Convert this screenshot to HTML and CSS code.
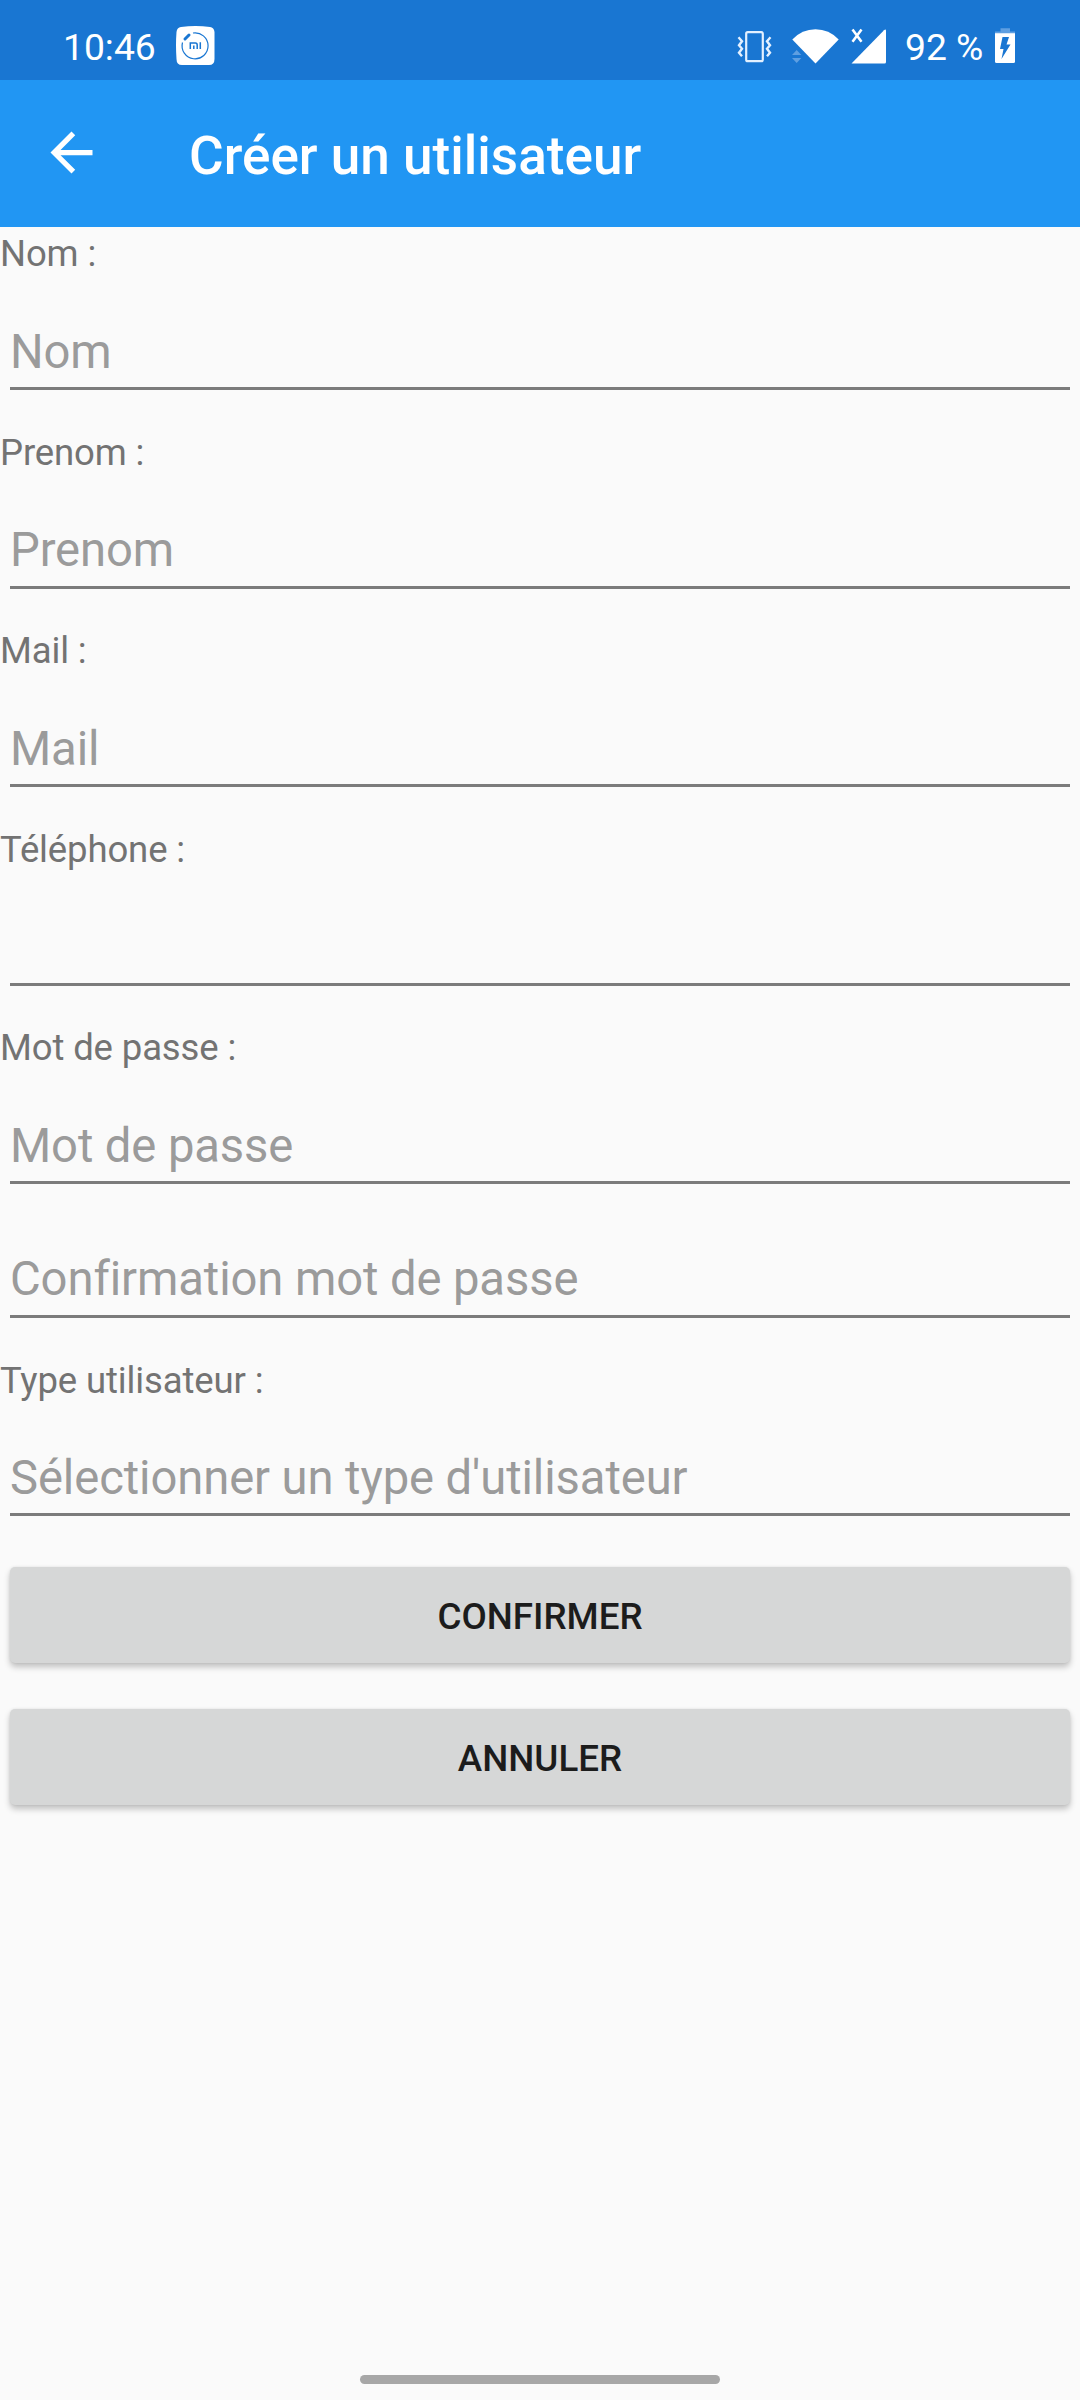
FILE: index.html
```html
<!DOCTYPE html>
<html lang="fr">
<head>
<meta charset="utf-8">
<title>Créer un utilisateur</title>
<link rel="stylesheet" href="styles.css">
</head>
<body>
<div class="screen">
  <header class="status-bar">
    <span class="clock">10:46</span>
    <svg class="app-icon" width="39" height="39" viewBox="0 0 39 39">
      <path d="M5 1Q19.500 -1 34 1Q38 1.500 38.500 6V33Q38.500 39 33 39H6Q.5 39 .5 33Q-.5 19 .5 6Q1 1.500 5 1Z" fill="#fff"/>
      <path d="M17 7A13 13 0 1 1 6.500 16.500" fill="none" stroke="#1976d2" stroke-width="1.200"/>
      <path d="M9 13L13 9" stroke="#1976d2" stroke-width="3" stroke-linecap="round"/>
      <path d="M14.300 23V17H19.500Q21.200 17 21.200 19V23M17.800 19.500V23M24.300 16.200V23" fill="none" stroke="#1976d2" stroke-width="1.500"/>
    </svg>
    <span class="spacer"></span>
    <svg class="vibrate" width="36" height="34" viewBox="0 0 36 34">
      <rect x="9.200" y="3.200" width="16.600" height="29" rx="1.500" fill="none" stroke="#e3f0ff" stroke-width="2.200"/>
      <path d="M1.500 8L5 12L2 16L5 19.500L2 23.500L5 27M33.500 8L30 12L33 16L30 19.500L33 23.500L30 27" transform="translate(0 .2)" fill="none" stroke="#e3f0ff" stroke-width="2.400"/>
    </svg>
    <svg class="wifi" width="48" height="36" viewBox="0 0 48 36">
      <path d="M.3 11.500Q10 1.300 23.500 1.300Q37 1.300 46.700 11.500L23.500 35.500Z" fill="#fff"/>
      <path d="M0 27L4.700 22L9.300 27ZM0 30L4.700 35L9.300 30Z" fill="#5f9fe1"/>
    </svg>
    <svg class="signal" width="36" height="36" viewBox="0 0 36 36">
      <path d="M.5 35.500L33 2.300Q35 .5 35 3V34Q35 35.500 33.500 35.500Z" fill="#fff"/>
      <path d="M1.500 1.500L10.500 13.700M10.500 1.500L1.500 13.700" stroke="#fff" stroke-width="2.600"/>
    </svg>
    <span class="battery-level">92 %</span>
    <svg class="battery" width="20" height="36" viewBox="0 0 20 36">
      <path d="M5.500 1.300H15V4.500H20V7H0V4.500H5.500Z" fill="#5f9fe1"/>
      <path d="M0 6.300H20V34.500Q20 36 18.500 36H1.500Q0 36 0 34.500Z" fill="#fff"/>
      <path d="M7.500 10H14L11.500 17.500H15.500L6.500 32L8.500 22H5Z" fill="#1976d2"/>
    </svg>
  </header>
  <div class="app-bar">
    <svg class="back" width="63" height="63" viewBox="0 0 24 24"><path d="M20 11H7.830l5.590-5.590L12 4l-8 8 8 8 1.410-1.410L7.830 13H20v-2z" fill="#fff"/></svg>
    <h1 class="title">Créer un utilisateur</h1>
  </div>
  <main class="form">
    <label class="label" for="nom">Nom :</label>
    <div class="field"><input class="input" id="nom" placeholder="Nom"></div>
    <label class="label" for="prenom">Prenom :</label>
    <div class="field"><input class="input" id="prenom" placeholder="Prenom"></div>
    <label class="label" for="mail">Mail :</label>
    <div class="field"><input class="input" id="mail" placeholder="Mail"></div>
    <label class="label" for="tel">Téléphone :</label>
    <div class="field"><input class="input" id="tel"></div>
    <label class="label" for="mdp">Mot de passe :</label>
    <div class="field"><input class="input" id="mdp" placeholder="Mot de passe"></div>
    <div class="field"><input class="input" placeholder="Confirmation mot de passe"></div>
    <label class="label" for="type">Type utilisateur :</label>
    <div class="field"><input class="input" id="type" placeholder="Sélectionner un type d'utilisateur"></div>
    <div class="actions">
      <button class="button">CONFIRMER</button>
      <button class="button">ANNULER</button>
    </div>
  </main>
  <footer class="nav-bar"><div class="handle"></div></footer>
</div>
</body>
</html>
```
FILE: styles.css
```css
* { box-sizing: border-box; }

body {
  margin: 0;
  background: #fafafa;
  font-family: Roboto, sans-serif;
}

.screen {
  width: 1080px;
  height: 2400px;
  display: flex;
  flex-direction: column;
  overflow: hidden;
}

.status-bar {
  height: 80px;
  padding: 0 65px 0 63px;
  display: flex;
  align-items: flex-start;
  background: #1976d2;
  color: #fff;
  font-size: 37.25px;
  line-height: 44px;
}

.status-bar svg { flex: none; }
.clock { width: 113px; padding-top: 25px; }
.app-icon { margin-top: 26px; }
.spacer { flex: 1; }
.vibrate { margin: 29px 19px 0 0; }
.wifi { margin: 28px 11px 0 0; }
.signal { margin: 28px 18px 0 0; }
.battery-level { width: 90px; padding-top: 25px; white-space: nowrap; }
.battery { margin-top: 27px; }

.app-bar {
  height: 147px;
  padding: 41px 40px 0;
  display: flex;
  align-items: flex-start;
  background: #2196f3;
}

.title {
  margin: 4px 0 0 86px;
  color: #fff;
  font-size: 53.1px;
  font-weight: 500;
  line-height: 62px;
}

.form {
  flex: 1;
  padding-top: .4px;
  display: flex;
  flex-direction: column;
  gap: 15.75px;
}

.label {
  height: 49px;
  padding-top: 5px;
  color: #737373;
  font-size: 36.5px;
  letter-spacing: -.13px;
  line-height: 43px;
}

.field { height: 118px; padding: 0 10px; }

.input {
  display: block;
  width: 100%;
  height: 98px;
  padding: 24px 0 0;
  border: 0;
  border-bottom: 3px solid #7b7b7b;
  border-radius: 0;
  outline: 0;
  background: transparent;
  color: #212121;
  font: 47.2px Roboto, sans-serif;
  letter-spacing: -.1px;
  font-variant-ligatures: common-ligatures;
}

.input::placeholder { color: #9b9b9b; opacity: 1; }

.actions {
  padding: 15.1px 10px 0;
  display: flex;
  flex-direction: column;
  gap: 46px;
}

.button {
  height: 96px;
  padding: 2px 0 0;
  border: 0;
  border-radius: 5px;
  background: #d6d7d7;
  box-shadow: 0 4px 6px rgba(0, 0, 0, .23), 0 0 3px rgba(0, 0, 0, .08);
  color: #1c1c1c;
  font: 500 36.75px Roboto, sans-serif;
}

.nav-bar {
  height: 25px;
  display: flex;
  justify-content: center;
  align-items: flex-start;
}

.handle {
  width: 360px;
  height: 9px;
  border-radius: 5px;
  background: #a7a7a7;
}
```
